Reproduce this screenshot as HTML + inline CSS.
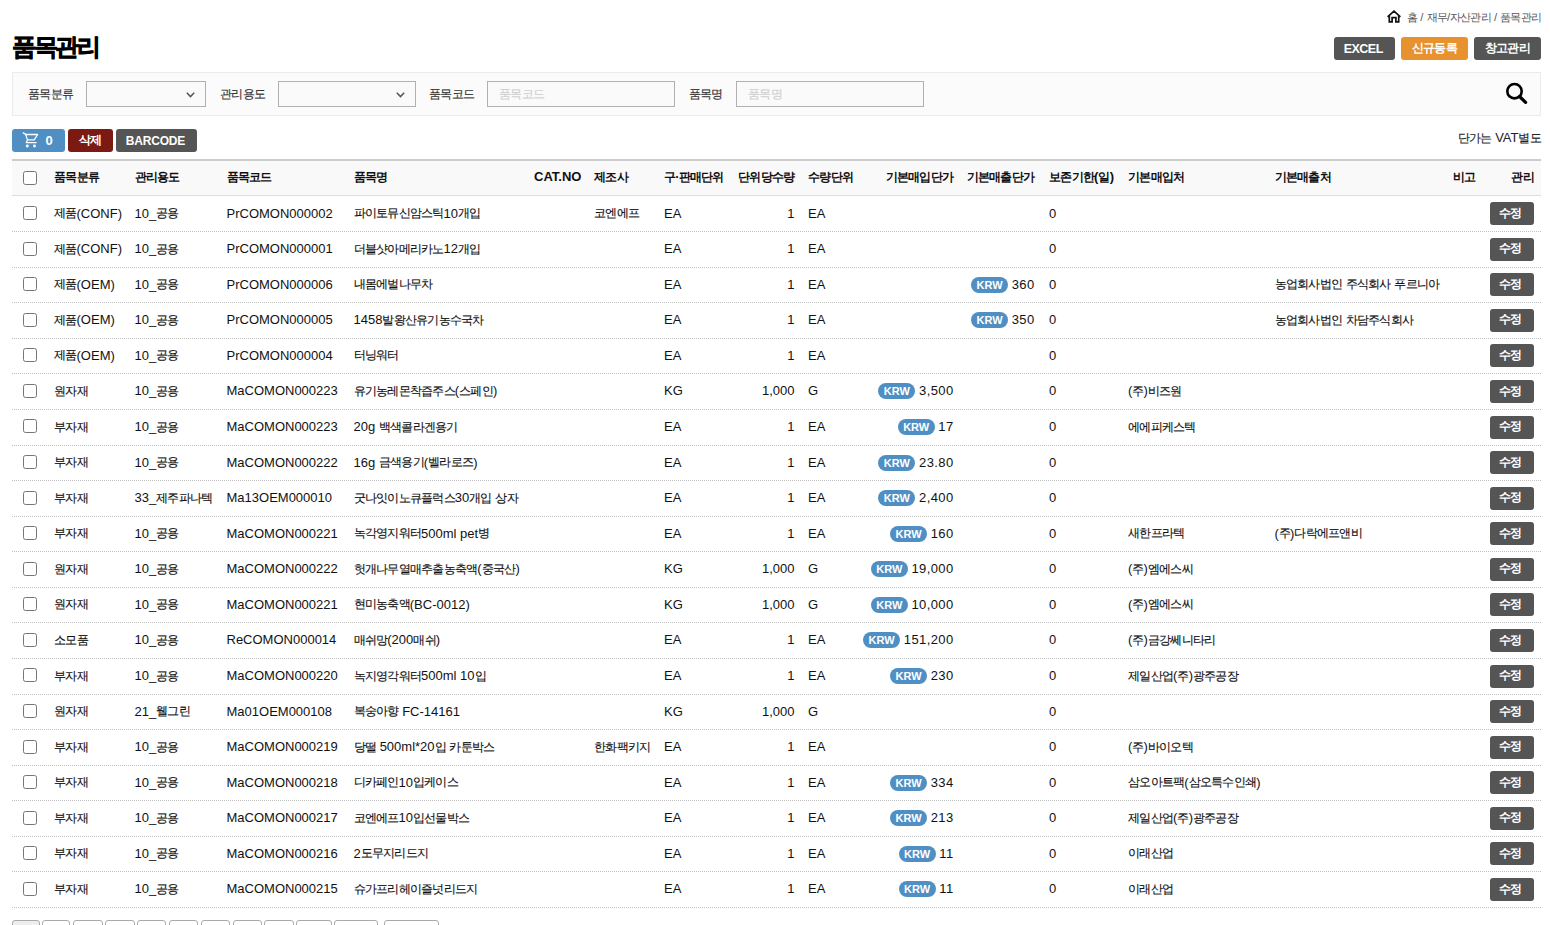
<!DOCTYPE html>
<html><head><meta charset="utf-8">
<style>
html,body{margin:0;padding:0;background:#fff;}
body{width:1550px;height:925px;overflow:hidden;position:relative;font-family:"Liberation Sans",sans-serif;font-size:13px;color:#333;}
.k{letter-spacing:-0.06em;font-size:96%;position:relative;top:-0.5px;-webkit-text-stroke:0.15px currentColor}
.abs{position:absolute;}
.bc{position:absolute;left:1387px;top:8px;font-size:11.3px;color:#555;white-space:nowrap;line-height:18px;}
.bc .k{letter-spacing:-0.075em;-webkit-text-stroke:0}
.title{position:absolute;left:12px;top:28px;font-size:25px;font-weight:bold;color:#000;line-height:36px;white-space:nowrap;}
.title .k{letter-spacing:-0.1em;}
.btn{position:absolute;height:23px;line-height:21px;border-radius:3px;color:#fff;font-weight:bold;font-size:13px;text-align:center;white-space:nowrap;}
.btn .k{letter-spacing:-0.07em;-webkit-text-stroke:0}
.panel{position:absolute;left:12px;top:72px;width:1527px;height:42px;background:#fbfbfb;border:1px solid #ebebeb;}
.lbl{position:absolute;top:85px;line-height:18px;white-space:nowrap;color:#333;}
.sel{position:absolute;top:81px;height:24px;border:1px solid #b0b0b0;background:#fafafb;}
.ph{position:absolute;top:3px;left:11px;color:#d0d0d0;line-height:18px;white-space:nowrap;}
.tbl-top{position:absolute;left:12px;top:159px;width:1529px;height:2px;background:#ccc;}
.thead{position:absolute;left:12px;top:161px;width:1529px;height:34px;background:#f9f9f9;border-bottom:1px solid #ddd;}
.row{position:absolute;left:12px;width:1529px;height:34.571px;border-bottom:1px dotted #c0c0c0;}
.t{position:absolute;height:35.571px;line-height:33.6px;white-space:nowrap;color:#111;}
.th{font-weight:bold;color:#111;}
.th .k,.edit .k{-webkit-text-stroke:0}
.title .k{-webkit-text-stroke:0.7px #000}
.cb{position:absolute;left:19px;margin:3px 3px 3px 4px;width:14px;height:14px;}
.krw{display:inline-block;background:#4f8fc3;color:#fff;font-weight:bold;font-size:11px;height:16px;line-height:16px;border-radius:8px;padding:0 5.5px;vertical-align:0px;}
.edit{position:absolute;left:1490px;width:44px;height:23px;line-height:21px;text-indent:-3px;background:#555;color:#fff;border-radius:3px;text-align:center;font-weight:bold;font-size:13px;}
.pg{position:absolute;top:920px;height:20px;border:1px solid #aaa;border-radius:3px;background:#fff;}
</style></head><body>

<div class="bc">
<svg class="abs" style="left:0;top:2px" width="14" height="13" viewBox="0 0 14 13"><path d="M0.6 6.9 L7 1.2 L13.4 6.9 M2.3 5.4 V11.9 H5.1 V7.6 H8.9 V11.9 H11.7 V5.4" fill="none" stroke="#111" stroke-width="1.7" stroke-linejoin="miter"/></svg>
<span style="position:absolute;left:20px;top:0"><span class="k">홈</span> / <span class="k">재무</span>/<span class="k">자산관리</span> / <span class="k">품목관리</span></span>
</div>

<div class="title"><span class="k">품목관리</span></div>

<div class="btn" style="left:1334px;width:61px;top:37px;background:#555;font-size:12.5px;letter-spacing:-0.5px;text-indent:-2.5px;line-height:24px">EXCEL</div>
<div class="btn" style="left:1401px;width:67px;top:37px;background:#e8912f"><span class="k">신규등록</span></div>
<div class="btn" style="left:1474px;width:67px;top:37px;background:#555"><span class="k">창고관리</span></div>

<div class="panel"></div>
<div class="lbl" style="left:28px"><span class="k">품목분류</span></div>
<div class="sel" style="left:86px;width:118px"><svg class="abs" style="right:10.5px;top:10px" width="9" height="6" viewBox="0 0 9 6"><path d="M0.8 0.8 L4.5 4.6 L8.2 0.8" fill="none" stroke="#555" stroke-width="1.5"/></svg></div>
<div class="lbl" style="left:220px"><span class="k">관리용도</span></div>
<div class="sel" style="left:278px;width:136px"><svg class="abs" style="right:10.5px;top:10px" width="9" height="6" viewBox="0 0 9 6"><path d="M0.8 0.8 L4.5 4.6 L8.2 0.8" fill="none" stroke="#555" stroke-width="1.5"/></svg></div>
<div class="lbl" style="left:429px"><span class="k">품목코드</span></div>
<div class="sel" style="left:487px;width:186px"><div class="ph"><span class="k">품목코드</span></div></div>
<div class="lbl" style="left:688.5px"><span class="k">품목명</span></div>
<div class="sel" style="left:736px;width:186px"><div class="ph"><span class="k">품목명</span></div></div>
<svg class="abs" style="left:1503px;top:80px" width="28" height="28" viewBox="0 0 28 28"><circle cx="11.5" cy="11.2" r="7.2" fill="none" stroke="#000" stroke-width="2.6"/><path d="M16.5 16.5 L22.6 22.3" stroke="#000" stroke-width="3.2" stroke-linecap="round"/></svg>

<div class="btn" style="left:12px;width:53px;top:129px;background:#4f8fc3">
<svg class="abs" style="left:0;top:0" width="40" height="23" viewBox="0 0 40 23"><path d="M11.2 3.9 L13.4 5.1 L15.5 10.8 L14.3 13.7 H24.1 M13.6 5.5 H25.6 L22.2 10.8 H15.5" fill="none" stroke="#fff" stroke-width="1.3" stroke-linejoin="round" stroke-linecap="round"/><circle cx="15.3" cy="17" r="1.45" fill="#fff"/><circle cx="22.5" cy="17" r="1.45" fill="#fff"/></svg>
<span class="abs" style="left:33.5px;top:0.5px;font-size:13px">0</span></div>
<div class="btn" style="left:68px;width:45px;top:129px;background:#7a1a12"><span class="k">삭제</span></div>
<div class="btn" style="left:116px;width:81px;top:129px;background:#555;font-size:12px;letter-spacing:-0.2px;line-height:24px;text-indent:-2px">BARCODE</div>
<div class="abs" style="right:9px;top:129px;line-height:18px;white-space:nowrap;color:#222"><span class="k">단가는</span> VAT<span class="k">별도</span></div>

<div class="tbl-top"></div>
<div class="thead"></div>
<div class="t th" style="left:54px;top:160.00px"><span class="k">품목분류</span></div>
<div class="t th" style="left:134.5px;top:160.00px"><span class="k">관리용도</span></div>
<div class="t th" style="left:226.5px;top:160.00px"><span class="k">품목코드</span></div>
<div class="t th" style="left:353.5px;top:160.00px"><span class="k">품목명</span></div>
<div class="t th" style="left:534px;top:160.00px">CAT.NO</div>
<div class="t th" style="left:594px;top:160.00px"><span class="k">제조사</span></div>
<div class="t th" style="left:664px;top:160.00px"><span class="k">구·판매단위</span></div>
<div class="t th" style="right:755.5px;top:160.00px;text-align:right"><span class="k">단위당수량</span></div>
<div class="t th" style="left:808px;top:160.00px"><span class="k">수량단위</span></div>
<div class="t th" style="right:596.8px;top:160.00px;text-align:right"><span class="k">기본매입단가</span></div>
<div class="t th" style="right:515.8px;top:160.00px;text-align:right"><span class="k">기본매출단가</span></div>
<div class="t th" style="left:1049px;top:160.00px"><span class="k">보존기한</span>(<span class="k">일</span>)</div>
<div class="t th" style="left:1128px;top:160.00px"><span class="k">기본매입처</span></div>
<div class="t th" style="left:1274.5px;top:160.00px"><span class="k">기본매출처</span></div>
<div class="t th" style="left:1453px;top:160.00px"><span class="k">비고</span></div>
<div class="t th" style="right:16px;top:160.00px;text-align:right"><span class="k">관리</span></div>
<input type="checkbox" class="cb" style="top:168px">
<div class="row" style="top:196.580px"></div>
<input type="checkbox" class="cb" style="top:202.98px">
<div class="t" style="left:54px;top:196.58px"><span class="k">제품</span>(CONF)</div>
<div class="t" style="left:134.5px;top:196.58px">10_<span class="k">공용</span></div>
<div class="t" style="left:226.5px;top:196.58px">PrCOMON000002</div>
<div class="t" style="left:353.5px;top:196.58px"><span class="k">파이토뮤신암스틱</span>10<span class="k">개입</span></div>
<div class="t" style="left:594px;top:196.58px"><span class="k">코엔에프</span></div>
<div class="t" style="left:664px;top:196.58px">EA</div>
<div class="t" style="right:755.5px;top:196.58px;text-align:right">1</div>
<div class="t" style="left:808px;top:196.58px">EA</div>
<div class="t" style="left:1049px;top:196.58px">0</div>
<div class="edit" style="top:202.18px"><span class="k">수정</span></div>
<div class="row" style="top:232.151px"></div>
<input type="checkbox" class="cb" style="top:238.55px">
<div class="t" style="left:54px;top:232.15px"><span class="k">제품</span>(CONF)</div>
<div class="t" style="left:134.5px;top:232.15px">10_<span class="k">공용</span></div>
<div class="t" style="left:226.5px;top:232.15px">PrCOMON000001</div>
<div class="t" style="left:353.5px;top:232.15px"><span class="k">더블샷아메리카노</span>12<span class="k">개입</span></div>
<div class="t" style="left:664px;top:232.15px">EA</div>
<div class="t" style="right:755.5px;top:232.15px;text-align:right">1</div>
<div class="t" style="left:808px;top:232.15px">EA</div>
<div class="t" style="left:1049px;top:232.15px">0</div>
<div class="edit" style="top:237.75px"><span class="k">수정</span></div>
<div class="row" style="top:267.722px"></div>
<input type="checkbox" class="cb" style="top:274.12px">
<div class="t" style="left:54px;top:267.72px"><span class="k">제품</span>(OEM)</div>
<div class="t" style="left:134.5px;top:267.72px">10_<span class="k">공용</span></div>
<div class="t" style="left:226.5px;top:267.72px">PrCOMON000006</div>
<div class="t" style="left:353.5px;top:267.72px"><span class="k">내몸에벌나무차</span></div>
<div class="t" style="left:664px;top:267.72px">EA</div>
<div class="t" style="right:755.5px;top:267.72px;text-align:right">1</div>
<div class="t" style="left:808px;top:267.72px">EA</div>
<div class="t" style="right:515.8px;top:267.72px;text-align:right"><span class="krw">KRW</span> <span style="letter-spacing:0.4px;margin-right:-0.4px">360</span></div>
<div class="t" style="left:1049px;top:267.72px">0</div>
<div class="t" style="left:1274.5px;top:267.72px"><span class="k">농업회사법인</span> <span class="k">주식회사</span> <span class="k">푸르니아</span></div>
<div class="edit" style="top:273.32px"><span class="k">수정</span></div>
<div class="row" style="top:303.293px"></div>
<input type="checkbox" class="cb" style="top:309.69px">
<div class="t" style="left:54px;top:303.29px"><span class="k">제품</span>(OEM)</div>
<div class="t" style="left:134.5px;top:303.29px">10_<span class="k">공용</span></div>
<div class="t" style="left:226.5px;top:303.29px">PrCOMON000005</div>
<div class="t" style="left:353.5px;top:303.29px">1458<span class="k">발왕산유기농수국차</span></div>
<div class="t" style="left:664px;top:303.29px">EA</div>
<div class="t" style="right:755.5px;top:303.29px;text-align:right">1</div>
<div class="t" style="left:808px;top:303.29px">EA</div>
<div class="t" style="right:515.8px;top:303.29px;text-align:right"><span class="krw">KRW</span> <span style="letter-spacing:0.4px;margin-right:-0.4px">350</span></div>
<div class="t" style="left:1049px;top:303.29px">0</div>
<div class="t" style="left:1274.5px;top:303.29px"><span class="k">농업회사법인</span> <span class="k">차담주식회사</span></div>
<div class="edit" style="top:308.89px"><span class="k">수정</span></div>
<div class="row" style="top:338.864px"></div>
<input type="checkbox" class="cb" style="top:345.26px">
<div class="t" style="left:54px;top:338.86px"><span class="k">제품</span>(OEM)</div>
<div class="t" style="left:134.5px;top:338.86px">10_<span class="k">공용</span></div>
<div class="t" style="left:226.5px;top:338.86px">PrCOMON000004</div>
<div class="t" style="left:353.5px;top:338.86px"><span class="k">터닝워터</span></div>
<div class="t" style="left:664px;top:338.86px">EA</div>
<div class="t" style="right:755.5px;top:338.86px;text-align:right">1</div>
<div class="t" style="left:808px;top:338.86px">EA</div>
<div class="t" style="left:1049px;top:338.86px">0</div>
<div class="edit" style="top:344.46px"><span class="k">수정</span></div>
<div class="row" style="top:374.435px"></div>
<input type="checkbox" class="cb" style="top:380.83px">
<div class="t" style="left:54px;top:374.44px"><span class="k">원자재</span></div>
<div class="t" style="left:134.5px;top:374.44px">10_<span class="k">공용</span></div>
<div class="t" style="left:226.5px;top:374.44px">MaCOMON000223</div>
<div class="t" style="left:353.5px;top:374.44px"><span class="k">유기농레몬착즙주스</span>(<span class="k">스페인</span>)</div>
<div class="t" style="left:664px;top:374.44px">KG</div>
<div class="t" style="right:755.5px;top:374.44px;text-align:right">1,000</div>
<div class="t" style="left:808px;top:374.44px">G</div>
<div class="t" style="right:596.8px;top:374.44px;text-align:right"><span class="krw">KRW</span> <span style="letter-spacing:0.4px;margin-right:-0.4px">3,500</span></div>
<div class="t" style="left:1049px;top:374.44px">0</div>
<div class="t" style="left:1128px;top:374.44px">(<span class="k">주</span>)<span class="k">비즈원</span></div>
<div class="edit" style="top:380.04px"><span class="k">수정</span></div>
<div class="row" style="top:410.006px"></div>
<input type="checkbox" class="cb" style="top:416.41px">
<div class="t" style="left:54px;top:410.01px"><span class="k">부자재</span></div>
<div class="t" style="left:134.5px;top:410.01px">10_<span class="k">공용</span></div>
<div class="t" style="left:226.5px;top:410.01px">MaCOMON000223</div>
<div class="t" style="left:353.5px;top:410.01px">20g <span class="k">백색콜라겐용기</span></div>
<div class="t" style="left:664px;top:410.01px">EA</div>
<div class="t" style="right:755.5px;top:410.01px;text-align:right">1</div>
<div class="t" style="left:808px;top:410.01px">EA</div>
<div class="t" style="right:596.8px;top:410.01px;text-align:right"><span class="krw">KRW</span> <span style="letter-spacing:0.4px;margin-right:-0.4px">17</span></div>
<div class="t" style="left:1049px;top:410.01px">0</div>
<div class="t" style="left:1128px;top:410.01px"><span class="k">에에피케스텍</span></div>
<div class="edit" style="top:415.61px"><span class="k">수정</span></div>
<div class="row" style="top:445.577px"></div>
<input type="checkbox" class="cb" style="top:451.98px">
<div class="t" style="left:54px;top:445.58px"><span class="k">부자재</span></div>
<div class="t" style="left:134.5px;top:445.58px">10_<span class="k">공용</span></div>
<div class="t" style="left:226.5px;top:445.58px">MaCOMON000222</div>
<div class="t" style="left:353.5px;top:445.58px">16g <span class="k">금색용기</span>(<span class="k">벨라로즈</span>)</div>
<div class="t" style="left:664px;top:445.58px">EA</div>
<div class="t" style="right:755.5px;top:445.58px;text-align:right">1</div>
<div class="t" style="left:808px;top:445.58px">EA</div>
<div class="t" style="right:596.8px;top:445.58px;text-align:right"><span class="krw">KRW</span> <span style="letter-spacing:0.4px;margin-right:-0.4px">23.80</span></div>
<div class="t" style="left:1049px;top:445.58px">0</div>
<div class="edit" style="top:451.18px"><span class="k">수정</span></div>
<div class="row" style="top:481.148px"></div>
<input type="checkbox" class="cb" style="top:487.55px">
<div class="t" style="left:54px;top:481.15px"><span class="k">부자재</span></div>
<div class="t" style="left:134.5px;top:481.15px">33_<span class="k">제주파나텍</span></div>
<div class="t" style="left:226.5px;top:481.15px">Ma13OEM000010</div>
<div class="t" style="left:353.5px;top:481.15px"><span class="k">굿나잇이노큐플럭스</span>30<span class="k">개입</span> <span class="k">상자</span></div>
<div class="t" style="left:664px;top:481.15px">EA</div>
<div class="t" style="right:755.5px;top:481.15px;text-align:right">1</div>
<div class="t" style="left:808px;top:481.15px">EA</div>
<div class="t" style="right:596.8px;top:481.15px;text-align:right"><span class="krw">KRW</span> <span style="letter-spacing:0.4px;margin-right:-0.4px">2,400</span></div>
<div class="t" style="left:1049px;top:481.15px">0</div>
<div class="edit" style="top:486.75px"><span class="k">수정</span></div>
<div class="row" style="top:516.719px"></div>
<input type="checkbox" class="cb" style="top:523.12px">
<div class="t" style="left:54px;top:516.72px"><span class="k">부자재</span></div>
<div class="t" style="left:134.5px;top:516.72px">10_<span class="k">공용</span></div>
<div class="t" style="left:226.5px;top:516.72px">MaCOMON000221</div>
<div class="t" style="left:353.5px;top:516.72px"><span class="k">녹각영지워터</span>500ml pet<span class="k">병</span></div>
<div class="t" style="left:664px;top:516.72px">EA</div>
<div class="t" style="right:755.5px;top:516.72px;text-align:right">1</div>
<div class="t" style="left:808px;top:516.72px">EA</div>
<div class="t" style="right:596.8px;top:516.72px;text-align:right"><span class="krw">KRW</span> <span style="letter-spacing:0.4px;margin-right:-0.4px">160</span></div>
<div class="t" style="left:1049px;top:516.72px">0</div>
<div class="t" style="left:1128px;top:516.72px"><span class="k">새한프라텍</span></div>
<div class="t" style="left:1274.5px;top:516.72px">(<span class="k">주</span>)<span class="k">다락에프앤비</span></div>
<div class="edit" style="top:522.32px"><span class="k">수정</span></div>
<div class="row" style="top:552.290px"></div>
<input type="checkbox" class="cb" style="top:558.69px">
<div class="t" style="left:54px;top:552.29px"><span class="k">원자재</span></div>
<div class="t" style="left:134.5px;top:552.29px">10_<span class="k">공용</span></div>
<div class="t" style="left:226.5px;top:552.29px">MaCOMON000222</div>
<div class="t" style="left:353.5px;top:552.29px"><span class="k">헛개나무열매추출농축액</span>(<span class="k">중국산</span>)</div>
<div class="t" style="left:664px;top:552.29px">KG</div>
<div class="t" style="right:755.5px;top:552.29px;text-align:right">1,000</div>
<div class="t" style="left:808px;top:552.29px">G</div>
<div class="t" style="right:596.8px;top:552.29px;text-align:right"><span class="krw">KRW</span> <span style="letter-spacing:0.4px;margin-right:-0.4px">19,000</span></div>
<div class="t" style="left:1049px;top:552.29px">0</div>
<div class="t" style="left:1128px;top:552.29px">(<span class="k">주</span>)<span class="k">엠에스씨</span></div>
<div class="edit" style="top:557.89px"><span class="k">수정</span></div>
<div class="row" style="top:587.861px"></div>
<input type="checkbox" class="cb" style="top:594.26px">
<div class="t" style="left:54px;top:587.86px"><span class="k">원자재</span></div>
<div class="t" style="left:134.5px;top:587.86px">10_<span class="k">공용</span></div>
<div class="t" style="left:226.5px;top:587.86px">MaCOMON000221</div>
<div class="t" style="left:353.5px;top:587.86px"><span class="k">현미농축액</span>(BC-0012)</div>
<div class="t" style="left:664px;top:587.86px">KG</div>
<div class="t" style="right:755.5px;top:587.86px;text-align:right">1,000</div>
<div class="t" style="left:808px;top:587.86px">G</div>
<div class="t" style="right:596.8px;top:587.86px;text-align:right"><span class="krw">KRW</span> <span style="letter-spacing:0.4px;margin-right:-0.4px">10,000</span></div>
<div class="t" style="left:1049px;top:587.86px">0</div>
<div class="t" style="left:1128px;top:587.86px">(<span class="k">주</span>)<span class="k">엠에스씨</span></div>
<div class="edit" style="top:593.46px"><span class="k">수정</span></div>
<div class="row" style="top:623.432px"></div>
<input type="checkbox" class="cb" style="top:629.83px">
<div class="t" style="left:54px;top:623.43px"><span class="k">소모품</span></div>
<div class="t" style="left:134.5px;top:623.43px">10_<span class="k">공용</span></div>
<div class="t" style="left:226.5px;top:623.43px">ReCOMON000014</div>
<div class="t" style="left:353.5px;top:623.43px"><span class="k">매쉬망</span>(200<span class="k">매쉬</span>)</div>
<div class="t" style="left:664px;top:623.43px">EA</div>
<div class="t" style="right:755.5px;top:623.43px;text-align:right">1</div>
<div class="t" style="left:808px;top:623.43px">EA</div>
<div class="t" style="right:596.8px;top:623.43px;text-align:right"><span class="krw">KRW</span> <span style="letter-spacing:0.4px;margin-right:-0.4px">151,200</span></div>
<div class="t" style="left:1049px;top:623.43px">0</div>
<div class="t" style="left:1128px;top:623.43px">(<span class="k">주</span>)<span class="k">금강쎄니타리</span></div>
<div class="edit" style="top:629.03px"><span class="k">수정</span></div>
<div class="row" style="top:659.003px"></div>
<input type="checkbox" class="cb" style="top:665.40px">
<div class="t" style="left:54px;top:659.00px"><span class="k">부자재</span></div>
<div class="t" style="left:134.5px;top:659.00px">10_<span class="k">공용</span></div>
<div class="t" style="left:226.5px;top:659.00px">MaCOMON000220</div>
<div class="t" style="left:353.5px;top:659.00px"><span class="k">녹지영각워터</span>500ml 10<span class="k">입</span></div>
<div class="t" style="left:664px;top:659.00px">EA</div>
<div class="t" style="right:755.5px;top:659.00px;text-align:right">1</div>
<div class="t" style="left:808px;top:659.00px">EA</div>
<div class="t" style="right:596.8px;top:659.00px;text-align:right"><span class="krw">KRW</span> <span style="letter-spacing:0.4px;margin-right:-0.4px">230</span></div>
<div class="t" style="left:1049px;top:659.00px">0</div>
<div class="t" style="left:1128px;top:659.00px"><span class="k">제일산업</span>(<span class="k">주</span>)<span class="k">광주공장</span></div>
<div class="edit" style="top:664.60px"><span class="k">수정</span></div>
<div class="row" style="top:694.574px"></div>
<input type="checkbox" class="cb" style="top:700.97px">
<div class="t" style="left:54px;top:694.57px"><span class="k">원자재</span></div>
<div class="t" style="left:134.5px;top:694.57px">21_<span class="k">웰그린</span></div>
<div class="t" style="left:226.5px;top:694.57px">Ma01OEM000108</div>
<div class="t" style="left:353.5px;top:694.57px"><span class="k">복숭아향</span> FC-14161</div>
<div class="t" style="left:664px;top:694.57px">KG</div>
<div class="t" style="right:755.5px;top:694.57px;text-align:right">1,000</div>
<div class="t" style="left:808px;top:694.57px">G</div>
<div class="t" style="left:1049px;top:694.57px">0</div>
<div class="edit" style="top:700.17px"><span class="k">수정</span></div>
<div class="row" style="top:730.145px"></div>
<input type="checkbox" class="cb" style="top:736.54px">
<div class="t" style="left:54px;top:730.14px"><span class="k">부자재</span></div>
<div class="t" style="left:134.5px;top:730.14px">10_<span class="k">공용</span></div>
<div class="t" style="left:226.5px;top:730.14px">MaCOMON000219</div>
<div class="t" style="left:353.5px;top:730.14px"><span class="k">당떨</span> 500ml*20<span class="k">입</span> <span class="k">카툰박스</span></div>
<div class="t" style="left:594px;top:730.14px"><span class="k">한화팩키지</span></div>
<div class="t" style="left:664px;top:730.14px">EA</div>
<div class="t" style="right:755.5px;top:730.14px;text-align:right">1</div>
<div class="t" style="left:808px;top:730.14px">EA</div>
<div class="t" style="left:1049px;top:730.14px">0</div>
<div class="t" style="left:1128px;top:730.14px">(<span class="k">주</span>)<span class="k">바이오텍</span></div>
<div class="edit" style="top:735.75px"><span class="k">수정</span></div>
<div class="row" style="top:765.716px"></div>
<input type="checkbox" class="cb" style="top:772.12px">
<div class="t" style="left:54px;top:765.72px"><span class="k">부자재</span></div>
<div class="t" style="left:134.5px;top:765.72px">10_<span class="k">공용</span></div>
<div class="t" style="left:226.5px;top:765.72px">MaCOMON000218</div>
<div class="t" style="left:353.5px;top:765.72px"><span class="k">디카페인</span>10<span class="k">입케이스</span></div>
<div class="t" style="left:664px;top:765.72px">EA</div>
<div class="t" style="right:755.5px;top:765.72px;text-align:right">1</div>
<div class="t" style="left:808px;top:765.72px">EA</div>
<div class="t" style="right:596.8px;top:765.72px;text-align:right"><span class="krw">KRW</span> <span style="letter-spacing:0.4px;margin-right:-0.4px">334</span></div>
<div class="t" style="left:1049px;top:765.72px">0</div>
<div class="t" style="left:1128px;top:765.72px"><span class="k">삼오아트팩</span>(<span class="k">삼오특수인쇄</span>)</div>
<div class="edit" style="top:771.32px"><span class="k">수정</span></div>
<div class="row" style="top:801.287px"></div>
<input type="checkbox" class="cb" style="top:807.69px">
<div class="t" style="left:54px;top:801.29px"><span class="k">부자재</span></div>
<div class="t" style="left:134.5px;top:801.29px">10_<span class="k">공용</span></div>
<div class="t" style="left:226.5px;top:801.29px">MaCOMON000217</div>
<div class="t" style="left:353.5px;top:801.29px"><span class="k">코엔에프</span>10<span class="k">입선물박스</span></div>
<div class="t" style="left:664px;top:801.29px">EA</div>
<div class="t" style="right:755.5px;top:801.29px;text-align:right">1</div>
<div class="t" style="left:808px;top:801.29px">EA</div>
<div class="t" style="right:596.8px;top:801.29px;text-align:right"><span class="krw">KRW</span> <span style="letter-spacing:0.4px;margin-right:-0.4px">213</span></div>
<div class="t" style="left:1049px;top:801.29px">0</div>
<div class="t" style="left:1128px;top:801.29px"><span class="k">제일산업</span>(<span class="k">주</span>)<span class="k">광주공장</span></div>
<div class="edit" style="top:806.89px"><span class="k">수정</span></div>
<div class="row" style="top:836.858px"></div>
<input type="checkbox" class="cb" style="top:843.26px">
<div class="t" style="left:54px;top:836.86px"><span class="k">부자재</span></div>
<div class="t" style="left:134.5px;top:836.86px">10_<span class="k">공용</span></div>
<div class="t" style="left:226.5px;top:836.86px">MaCOMON000216</div>
<div class="t" style="left:353.5px;top:836.86px">2<span class="k">도무지리드지</span></div>
<div class="t" style="left:664px;top:836.86px">EA</div>
<div class="t" style="right:755.5px;top:836.86px;text-align:right">1</div>
<div class="t" style="left:808px;top:836.86px">EA</div>
<div class="t" style="right:596.8px;top:836.86px;text-align:right"><span class="krw">KRW</span> <span style="letter-spacing:0.4px;margin-right:-0.4px">11</span></div>
<div class="t" style="left:1049px;top:836.86px">0</div>
<div class="t" style="left:1128px;top:836.86px"><span class="k">이래산업</span></div>
<div class="edit" style="top:842.46px"><span class="k">수정</span></div>
<div class="row" style="top:872.429px"></div>
<input type="checkbox" class="cb" style="top:878.83px">
<div class="t" style="left:54px;top:872.43px"><span class="k">부자재</span></div>
<div class="t" style="left:134.5px;top:872.43px">10_<span class="k">공용</span></div>
<div class="t" style="left:226.5px;top:872.43px">MaCOMON000215</div>
<div class="t" style="left:353.5px;top:872.43px"><span class="k">슈가프리헤이즐넛리드지</span></div>
<div class="t" style="left:664px;top:872.43px">EA</div>
<div class="t" style="right:755.5px;top:872.43px;text-align:right">1</div>
<div class="t" style="left:808px;top:872.43px">EA</div>
<div class="t" style="right:596.8px;top:872.43px;text-align:right"><span class="krw">KRW</span> <span style="letter-spacing:0.4px;margin-right:-0.4px">11</span></div>
<div class="t" style="left:1049px;top:872.43px">0</div>
<div class="t" style="left:1128px;top:872.43px"><span class="k">이래산업</span></div>
<div class="edit" style="top:878.03px"><span class="k">수정</span></div>
<div class="pg" style="left:12px;width:26px;background:#eee"></div>
<div class="pg" style="left:42px;width:26px;background:#fff"></div>
<div class="pg" style="left:73px;width:28px;background:#fff"></div>
<div class="pg" style="left:105px;width:28px;background:#fff"></div>
<div class="pg" style="left:137px;width:27px;background:#fff"></div>
<div class="pg" style="left:169px;width:27px;background:#fff"></div>
<div class="pg" style="left:201px;width:27px;background:#fff"></div>
<div class="pg" style="left:233px;width:27px;background:#fff"></div>
<div class="pg" style="left:264px;width:28px;background:#fff"></div>
<div class="pg" style="left:296px;width:34px;background:#fff"></div>
<div class="pg" style="left:334px;width:42px;background:#fff"></div>
<div class="pg" style="left:384px;width:53px;background:#fff"></div>

</body></html>
